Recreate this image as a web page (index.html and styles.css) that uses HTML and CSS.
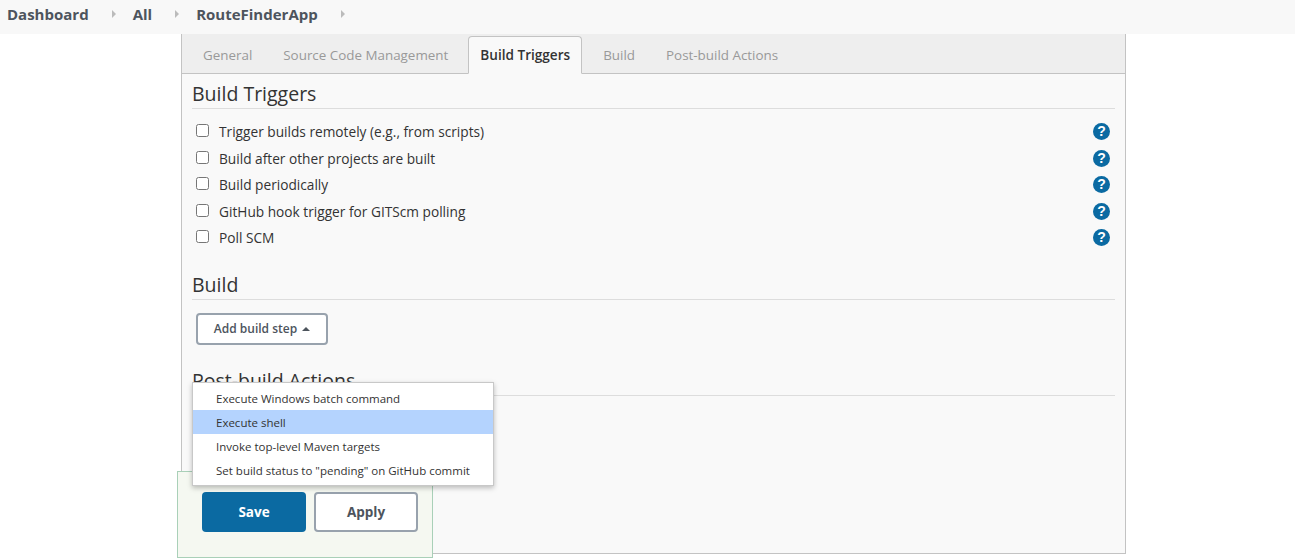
FILE: index.html
```html
<!DOCTYPE html>
<html lang="en">
<head>
<meta charset="UTF-8">
<title>RouteFinderApp Config</title>
<link rel="stylesheet" href="styles.css">
</head>
<body>
    <nav class="breadcrumbs">
        <a class="crumb" href="#">Dashboard</a>
        <svg class="crumb-arrow" viewBox="0 0 4 8"><path d="M0 0l4 4-4 4z"/></svg>
        <a class="crumb" href="#">All</a>
        <svg class="crumb-arrow" viewBox="0 0 4 8"><path d="M0 0l4 4-4 4z"/></svg>
        <a class="crumb" href="#">RouteFinderApp</a>
        <svg class="crumb-arrow" viewBox="0 0 4 8"><path d="M0 0l4 4-4 4z"/></svg>
    </nav>

    <main class="config">
        <div class="tabs">
            <a class="tab" href="#">General</a>
            <a class="tab" href="#">Source Code Management</a>
            <a class="tab tab-active" href="#">Build Triggers</a>
            <a class="tab" href="#">Build</a>
            <a class="tab" href="#">Post-build Actions</a>
        </div>

        <section class="section section-triggers">
            <h2 class="section-title">Build Triggers</h2>
            <div class="options">
                <label class="option"><input type="checkbox"><span>Trigger builds remotely (e.g., from scripts)</span><i class="help">?</i></label>
                <label class="option"><input type="checkbox"><span>Build after other projects are built</span><i class="help">?</i></label>
                <label class="option"><input type="checkbox"><span>Build periodically</span><i class="help">?</i></label>
                <label class="option"><input type="checkbox"><span>GitHub hook trigger for GITScm polling</span><i class="help">?</i></label>
                <label class="option"><input type="checkbox"><span>Poll SCM</span><i class="help">?</i></label>
            </div>
        </section>

        <section class="section section-build">
            <h2 class="section-title">Build</h2>
            <button class="step-btn" type="button">Add build step <svg class="caret" viewBox="0 0 8 4"><path d="M0 4l4-4 4 4z"/></svg></button>
        </section>

        <section class="section section-post">
            <h2 class="section-title">Post-build Actions</h2>
        </section>
    </main>

    <!-- menu opened from Add build step -->
    <ul class="menu">
        <li>Execute Windows batch command</li>
        <li class="menu-active">Execute shell</li>
        <li>Invoke top-level Maven targets</li>
        <li>Set build status to "pending" on GitHub commit</li>
    </ul>

    <div class="save-bar">
        <button class="btn btn-save" type="button">Save</button>
        <button class="btn btn-apply" type="button">Apply</button>
    </div>
</body>
</html>
```

FILE: styles.css
```css
* {
    margin: 0;
    padding: 0;
    box-sizing: border-box;
}
html, body {
    height: 559px;
    overflow: hidden;
}
body {
    font-family: 'Open Sans', 'Noto Sans', sans-serif;
    font-size: 13.7px;
    color: #333;
    background-color: #fff;
}
.breadcrumbs {
    display: flex;
    align-items: center;
    height: 34px;
    padding: 0 7px 6px;
    background-color: #f8f8f8;
}
.crumb {
    font-size: 15px;
    font-weight: 700;
    color: #4d545d;
    text-decoration: none;
}
.crumb-arrow {
    width: 4px;
    height: 8px;
    margin: 0 17px 0 23px;
    fill: #bbb;
}
.config {
    width: 945px;
    height: 520px;
    margin-left: 181px;
    border: 1px solid #c3c3c3;
    border-top: none;
    background-color: #f9f9f9;
}
.tabs {
    display: flex;
    height: 40px;
    padding-top: 2px;
    padding-left: 10px;
    background-color: #eee;
    border-bottom: 1px solid #c3c3c3;
}
.tab {
    height: 38px;
    padding: 0 10px;
    margin-right: 9px;
    font-size: 13.4px;
    line-height: 36px;
    color: #999;
    text-decoration: none;
    border: 1px solid transparent;
    white-space: nowrap;
}
.tab-active {
    padding: 0 11px;
    margin-right: 10px;
    font-size: 13.6px;
    font-weight: 600;
    color: #333;
    background-color: #f9f9f9;
    border-color: #c3c3c3;
    border-bottom-color: #f9f9f9;
    border-radius: 4px 4px 0 0;
}
.section {
    padding: 0 10px;
}
.section-title {
    font-size: 19.5px;
    font-weight: 400;
    line-height: 26px;
    padding-bottom: 1px;
    color: #333;
    border-bottom: 1px solid #ddd;
}
.section-triggers {
    padding-top: 7px;
}
.options {
    padding-top: 9.4px;
}
.option {
    display: flex;
    align-items: center;
    height: 26.5px;
    padding-left: 4px;
    color: #333;
}
.option input {
    width: 13px;
    height: 13px;
    margin-right: 10px;
    margin-bottom: 2px;
}
.option span {
    flex: 1;
}
.help {
    width: 17px;
    height: 17px;
    margin-right: 5px;
    border-radius: 50%;
    background-color: #0b6aa2;
    color: #fff;
    font-family: 'Liberation Sans', sans-serif;
    font-size: 14px;
    font-weight: 700;
    font-style: normal;
    line-height: 17px;
    text-align: center;
}
.section-build {
    padding-top: 21px;
}
.step-btn {
    display: flex;
    align-items: center;
    justify-content: center;
    gap: 5px;
    width: 132px;
    height: 32px;
    margin: 13px 0 0 4px;
    font-family: inherit;
    font-size: 12px;
    font-weight: 600;
    color: #4d545d;
    background-color: #fff;
    border: 2px solid #98a2ad;
    border-radius: 4px;
}
.caret {
    width: 8px;
    height: 4px;
    fill: #4d545d;
}
.section-post {
    padding-top: 23px;
}
.menu {
    position: absolute;
    left: 192px;
    top: 382px;
    z-index: 2;
    width: 302px;
    height: 104px;
    padding-top: 3px;
    list-style: none;
    font-size: 11.5px;
    color: #333;
    background-color: #fff;
    border: 1px solid #c8c8c8;
    box-shadow: 0 2px 5px rgba(0, 0, 0, 0.25);
}
.menu li {
    height: 24px;
    line-height: 25px;
    padding-left: 23px;
    white-space: nowrap;
}
.menu-active {
    background-color: #b4d3fe;
}
.save-bar {
    position: absolute;
    left: 177px;
    top: 471px;
    display: flex;
    gap: 8px;
    width: 256px;
    height: 87px;
    padding: 20px 0 0 24px;
    background-color: #f5f8f1;
    border: 1px solid #a9d0b8;
}
.btn {
    width: 104px;
    height: 40px;
    font-family: inherit;
    font-size: 13.5px;
    font-weight: 700;
    border-radius: 4px;
}
.btn-save {
    color: #fff;
    background-color: #0b6aa2;
    border: none;
}
.btn-apply {
    color: #4d545d;
    background-color: #fff;
    border: 2px solid #98a2ad;
}
```
